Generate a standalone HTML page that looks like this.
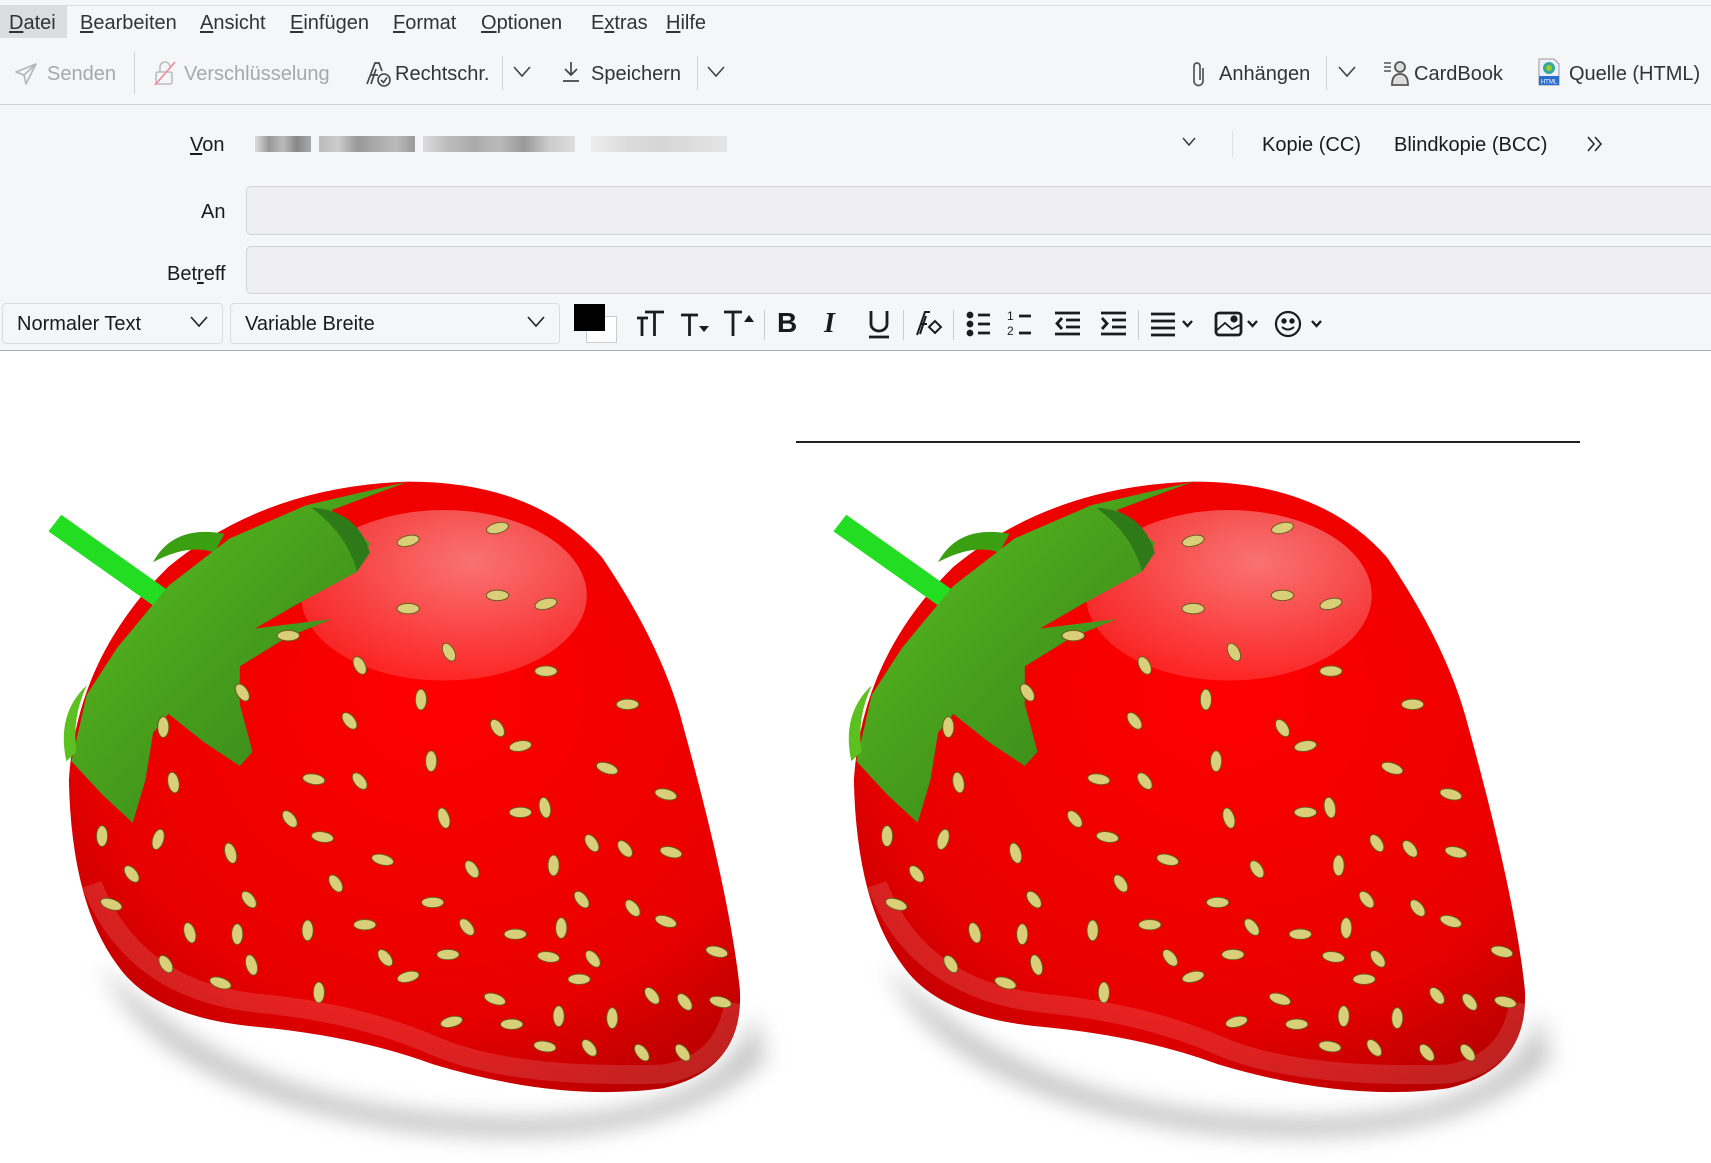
<!DOCTYPE html>
<html><head><meta charset="utf-8">
<style>
*{margin:0;padding:0;box-sizing:border-box}
body{width:1711px;height:1163px;overflow:hidden;background:#fff;font-family:"Liberation Sans","DejaVu Sans",sans-serif;position:relative;color:#1a1a1a}
.top{position:absolute;left:0;top:0;width:1711px;height:351px;background:#f5f6f8}
.t{position:absolute;font-size:20px;white-space:nowrap;line-height:24px}
.menu .t{top:11px;color:#333}
u{text-decoration:underline;text-underline-offset:2px}
.sep{position:absolute;width:1px;background:#cfcfd4}
.hl{position:absolute;height:1px;background:#cfcfd4;left:0;width:1711px}
.box{position:absolute;left:246px;width:1470px;background:#efeff3;border:1px solid #d2d2d8;border-radius:5px}
.sel{position:absolute;top:303px;height:41px;border:1px solid #dcdce0;border-radius:4px;background:#f5f6f8}
svg{position:absolute;overflow:visible}
</style></head><body>
<div class="top"></div>
<div class="hl" style="top:5px;background:#dcdce0"></div>
<div style="position:absolute;left:0;top:6px;width:67px;height:32px;background:#dcdde1"></div>
<div class="menu">
<div class="t" style="left:9px"><u>D</u>atei</div>
<div class="t" style="left:80px"><u>B</u>earbeiten</div>
<div class="t" style="left:200px"><u>A</u>nsicht</div>
<div class="t" style="left:290px"><u>E</u>infügen</div>
<div class="t" style="left:393px"><u>F</u>ormat</div>
<div class="t" style="left:481px"><u>O</u>ptionen</div>
<div class="t" style="left:591px">E<u>x</u>tras</div>
<div class="t" style="left:666px"><u>H</u>ilfe</div>
</div>
<!-- toolbar -->
<svg style="left:14px;top:62px" width="24" height="24" viewBox="0 0 24 24"><path d="M22 2 L2 10 L10 13 L12 22 Z M10 13 L22 2" fill="none" stroke="#b5b5b9" stroke-width="1.6" stroke-linejoin="round"/></svg>
<div class="t" style="left:47px;top:62px;color:#a8a8ac">Senden</div>
<div class="sep" style="left:134px;top:52px;height:42px"></div>
<svg style="left:153px;top:60px" width="24" height="26" viewBox="0 0 24 26"><rect x="3" y="12" width="16" height="12" rx="2" fill="none" stroke="#bcbcc0" stroke-width="1.6"/><path d="M7 12 V7 a5 5 0 0 1 10 0" fill="none" stroke="#bcbcc0" stroke-width="1.6"/><path d="M2 25 L22 2" stroke="#f08a9a" stroke-width="1.6"/></svg>
<div class="t" style="left:184px;top:62px;color:#a8a8ac">Verschlüsselung</div>
<svg style="left:364px;top:60px" width="28" height="28" viewBox="0 0 28 28"><path d="M3 24 L11 3 L15 3 L18 11 M7 15 L14 15 M7 24 L12 9" fill="none" stroke="#444" stroke-width="1.7"/><circle cx="20" cy="20" r="6" fill="#f5f6f8" stroke="#444" stroke-width="1.6"/><path d="M17 20 L19.5 22.5 L23 17.5" fill="none" stroke="#444" stroke-width="1.6"/></svg>
<div class="t" style="left:395px;top:62px;color:#333">Rechtschr.</div>
<div class="sep" style="left:502px;top:56px;height:34px"></div>
<svg style="left:513px;top:66px" width="18" height="12" viewBox="0 0 18 12"><path d="M1 1 L9 10 L17 1" fill="none" stroke="#444" stroke-width="1.6"/></svg>
<svg style="left:561px;top:61px" width="20" height="22" viewBox="0 0 20 22"><path d="M10 1 V14 M4 8 L10 14 L16 8 M2 20 H18" fill="none" stroke="#444" stroke-width="1.7"/></svg>
<div class="t" style="left:591px;top:62px;color:#333">Speichern</div>
<div class="sep" style="left:697px;top:56px;height:34px"></div>
<svg style="left:707px;top:66px" width="18" height="12" viewBox="0 0 18 12"><path d="M1 1 L9 10 L17 1" fill="none" stroke="#444" stroke-width="1.6"/></svg>
<svg style="left:1191px;top:60px" width="16" height="28" viewBox="0 0 16 28"><path d="M12 8 V21 a4.5 4.5 0 0 1 -9 0 V6 a3 3 0 0 1 6 0 V20" fill="none" stroke="#555" stroke-width="1.7"/></svg>
<div class="t" style="left:1219px;top:62px;color:#333">Anhängen</div>
<div class="sep" style="left:1326px;top:56px;height:34px"></div>
<svg style="left:1338px;top:66px" width="18" height="12" viewBox="0 0 18 12"><path d="M1 1 L9 10 L17 1" fill="none" stroke="#444" stroke-width="1.6"/></svg>
<svg style="left:1383px;top:60px" width="28" height="26" viewBox="0 0 28 26"><path d="M1 3 H8 M1 7 H8 M1 11 H8" stroke="#555" stroke-width="1.4"/><circle cx="17" cy="7" r="5" fill="#ddd" stroke="#555" stroke-width="1.8"/><path d="M9 25 Q9 14 17 14 Q25 14 25 25 Z" fill="#ddd" stroke="#555" stroke-width="1.8"/></svg>
<div class="t" style="left:1414px;top:62px;color:#333">CardBook</div>
<svg style="left:1537px;top:58px" width="24" height="28" viewBox="0 0 24 28"><path d="M2 1 H17 L22 6 V27 H2 Z" fill="#eef" stroke="#999"/><circle cx="12" cy="10" r="6" fill="#3a9"/><circle cx="12" cy="10" r="3" fill="#9c3"/><rect x="2" y="18" width="20" height="9" fill="#2a6fd0"/><text x="12" y="25.5" font-size="6" fill="#fff" text-anchor="middle" font-family="Liberation Sans">HTML</text></svg>
<div class="t" style="left:1569px;top:62px;color:#333">Quelle (HTML)</div>
<div class="hl" style="top:104px"></div>
<!-- header fields -->
<div class="t" style="left:190px;top:133px"><u>V</u>on</div>
<div style="position:absolute;left:255px;top:136px;width:56px;height:16px;background:linear-gradient(90deg,#ddd,#999,#bbb,#888,#aaa)"></div>
<div style="position:absolute;left:319px;top:136px;width:96px;height:16px;background:linear-gradient(90deg,#bbb,#ccc,#999,#aaa,#bbb,#999)"></div>
<div style="position:absolute;left:423px;top:136px;width:152px;height:16px;background:linear-gradient(90deg,#ddd,#bbb,#aaa,#bbb,#999,#ccc,#ddd)"></div>
<div style="position:absolute;left:591px;top:136px;width:136px;height:16px;background:linear-gradient(90deg,#eee,#ddd,#d5d5d5,#ddd,#e5e5e5)"></div>
<svg style="left:1182px;top:137px" width="14" height="10" viewBox="0 0 14 10"><path d="M1 1 L7 8 L13 1" fill="none" stroke="#333" stroke-width="1.4"/></svg>
<div class="sep" style="left:1232px;top:130px;height:28px;background:#e0e0e4"></div>
<div class="t" style="left:1262px;top:133px">Kopie (CC)</div>
<div class="t" style="left:1394px;top:133px">Blindkopie (BCC)</div>
<svg style="left:1586px;top:135px" width="18" height="18" viewBox="0 0 18 18"><path d="M2 2 L8 9 L2 16 M9 2 L15 9 L9 16" fill="none" stroke="#222" stroke-width="1.5"/></svg>
<div class="t" style="left:201px;top:200px">An</div>
<div class="box" style="top:186px;height:49px"></div>
<div class="t" style="left:167px;top:262px">Bet<u>r</u>eff</div>
<div class="box" style="top:246px;height:48px"></div>
<!-- format toolbar -->
<div class="sel" style="left:2px;width:221px"></div>
<div class="t" style="left:17px;top:312px">Normaler Text</div>
<svg style="left:190px;top:316px" width="18" height="12" viewBox="0 0 18 12"><path d="M1 1 L9 10 L17 1" fill="none" stroke="#222" stroke-width="1.6"/></svg>
<div class="sel" style="left:230px;width:330px"></div>
<div class="t" style="left:245px;top:312px">Variable Breite</div>
<svg style="left:527px;top:316px" width="18" height="12" viewBox="0 0 18 12"><path d="M1 1 L9 10 L17 1" fill="none" stroke="#222" stroke-width="1.6"/></svg>
<div style="position:absolute;left:586px;top:316px;width:31px;height:27px;background:#fff;border:1px solid #ccc"></div>
<div style="position:absolute;left:574px;top:304px;width:31px;height:27px;background:#000"></div>
<svg style="left:630px;top:308px" width="470" height="30" viewBox="630 308 470 30" fill="none" stroke="#1c1c1c" stroke-width="2.8">
<path d="M637 318 H648 M642 318 V336 M645 312 H664 M654.5 312 V336"/>
<path d="M681 315 H698 M689.5 315 V336"/><path d="M699 326 H709 L704 332 Z" fill="#1c1c1c" stroke="none"/>
<path d="M724 312 H742 M733 312 V336"/><path d="M744 322 H754 L749 315 Z" fill="#1c1c1c" stroke="none"/>
</svg>
<div class="sep" style="left:764px;top:310px;height:30px;background:#ccc"></div>
<div class="t" style="left:777px;top:308px;font-size:28px;font-weight:bold;line-height:30px">B</div>
<div class="t" style="left:824px;top:309px;font-size:28px;font-style:italic;font-family:'Liberation Serif',serif;line-height:30px;font-weight:bold">I</div>
<svg style="left:866px;top:309px" width="26" height="30" viewBox="0 0 26 30" fill="none" stroke="#1c1c1c" stroke-width="2.8"><path d="M5 2 V15 a8 7 0 0 0 16 0 V2 M3 28 H23"/></svg>
<div class="sep" style="left:903px;top:310px;height:30px;background:#ccc"></div>
<svg style="left:915px;top:309px" width="28" height="30" viewBox="0 0 28 30" fill="none" stroke="#1c1c1c" stroke-width="2"><path d="M2 26 L10 3 L15 3 M6 15 H12 M5 25 L11 7"/><path d="M14 18 L20 12 L26 18 L20 24 Z"/></svg>
<div class="sep" style="left:953px;top:310px;height:30px;background:#ccc"></div>
<svg style="left:964px;top:310px" width="370" height="30" viewBox="964 310 370 30" fill="none" stroke="#1c1c1c" stroke-width="2.8">
<path d="M978 315 H990 M978 324 H990 M978 333 H990"/><circle cx="970" cy="315" r="2" fill="#1c1c1c"/><circle cx="970" cy="324" r="2" fill="#1c1c1c"/><circle cx="970" cy="333" r="2" fill="#1c1c1c"/>
<path d="M1019 316 H1031 M1019 333 H1031"/>
<path d="M1055 313 H1080 M1066 320 H1080 M1066 327 H1080 M1055 334 H1080 M1062 318 L1057 323.5 L1062 329"/>
<path d="M1101 313 H1126 M1112 320 H1126 M1112 327 H1126 M1101 334 H1126 M1102 318 L1107 323.5 L1102 329"/>
<path d="M1151 314 H1175 M1151 321 H1175 M1151 328 H1175 M1151 335 H1175"/>
<path d="M1183 321 L1187.5 326 L1192 321" stroke-width="2.4"/>
<rect x="1216" y="313" width="25" height="22" rx="3"/><path d="M1217 330 L1225 323 L1232 329 L1240 325" stroke-width="1.8"/><circle cx="1234" cy="319" r="2.2" fill="#1c1c1c"/>
<path d="M1248 321 L1252.5 326 L1257 321" stroke-width="2.4"/>
<circle cx="1288" cy="324" r="12" stroke-width="2.2"/><circle cx="1284" cy="321" r="1.3" fill="#1c1c1c"/><circle cx="1292" cy="321" r="1.3" fill="#1c1c1c"/><path d="M1282 327 Q1288 332 1294 327" stroke-width="2"/>
<path d="M1312 321 L1316.5 326 L1321 321" stroke-width="2.4"/>
</svg>
<div class="t" style="left:1007px;top:309px;font-size:12px;line-height:14px">1</div>
<div class="t" style="left:1007px;top:324px;font-size:12px;line-height:14px">2</div>
<div class="sep" style="left:1138px;top:310px;height:30px;background:#ccc"></div>
<div class="hl" style="top:350px;background:#aaa"></div>
<!-- content -->
<div style="position:absolute;left:796px;top:441px;width:784px;height:2px;background:#222"></div>
<svg style="left:0;top:0" width="1711" height="1163" viewBox="0 0 1711 1163">
<defs>
<filter id="bl" x="-20%" y="-20%" width="140%" height="140%"><feGaussianBlur stdDeviation="22"/></filter>
<radialGradient id="rg" cx="0.55" cy="0.35" r="0.75"><stop offset="0" stop-color="#ff0000"/><stop offset="0.7" stop-color="#e80000"/><stop offset="1" stop-color="#b00000"/></radialGradient>
<radialGradient id="hg" cx="0.6" cy="0.3" r="0.7"><stop offset="0" stop-color="#fff" stop-opacity="0.45"/><stop offset="1" stop-color="#fff" stop-opacity="0.15"/></radialGradient>
<linearGradient id="lg" x1="0" y1="0" x2="1" y2="1"><stop offset="0" stop-color="#5cc020"/><stop offset="1" stop-color="#2f7a18"/></linearGradient>
<g id="sb">
<path d="M200 1150 Q500 1480 1050 1470 Q1420 1460 1480 1250 L1500 1350 Q1300 1560 800 1500 Q300 1420 200 1150Z" fill="#999" opacity="0.55" filter="url(#bl)"/>
<path d="M800 130 Q1050 130 1180 290 Q1300 480 1340 650 Q1430 1000 1450 1200 Q1460 1370 1300 1410 Q1100 1440 850 1360 Q700 1300 500 1280 Q300 1260 230 1150 Q140 1020 135 760 Q150 500 330 310 Q520 140 800 130Z" fill="url(#rg)"/>
<path d="M180 980 Q260 1200 500 1230 Q700 1250 850 1320 Q1000 1390 1300 1380 Q1420 1360 1440 1230" fill="none" stroke="#fff" stroke-opacity="0.13" stroke-width="40"/>
<ellipse cx="870" cy="370" rx="280" ry="180" fill="url(#hg)"/>
<path d="M95 235 L120 200 L330 360 L305 395Z" fill="#22dd22"/>
<path d="M300 300 Q340 220 440 240 L420 280 Q370 260 300 300Z" fill="#3aa012"/>
<path d="M800 130 L600 180 L450 250 L330 350 L230 480 L170 580 L140 720 L200 790 L260 850 L285 760 L300 660 L330 620 L400 680 L470 730 L495 700 L470 600 L470 520 L560 460 L650 420 L500 440 L580 390 L700 320 L725 260 L650 190Z" fill="url(#lg)"/>
<path d="M610 185 Q700 190 725 280 L700 320 Q680 240 610 185Z" fill="#2f7a18"/>
<path d="M170 560 Q110 620 130 720 L150 700 Q140 630 170 560Z" fill="#5cc020"/>
<g fill="#d8cf78" stroke="#6b5a20" stroke-width="2">
<ellipse cx="800" cy="255" rx="22" ry="11" transform="rotate(-15 800 255)"/><ellipse cx="975" cy="228" rx="22" ry="11" transform="rotate(-15 975 228)"/><ellipse cx="800" cy="398" rx="22" ry="11"/><ellipse cx="975" cy="370" rx="22" ry="11"/><ellipse cx="1070" cy="388" rx="22" ry="11" transform="rotate(-15 1070 388)"/><ellipse cx="880" cy="490" rx="11" ry="20" transform="rotate(-25 880 490)"/><ellipse cx="705" cy="518" rx="11" ry="20" transform="rotate(-25 705 518)"/><ellipse cx="1070" cy="530" rx="22" ry="11"/><ellipse cx="825" cy="590" rx="11" ry="22"/><ellipse cx="685" cy="635" rx="11" ry="20" transform="rotate(-35 685 635)"/><ellipse cx="975" cy="650" rx="11" ry="20" transform="rotate(-30 975 650)"/><ellipse cx="1020" cy="688" rx="22" ry="11" transform="rotate(-10 1020 688)"/><ellipse cx="1230" cy="600" rx="22" ry="11"/><ellipse cx="845" cy="720" rx="11" ry="22"/><ellipse cx="1190" cy="735" rx="22" ry="11" transform="rotate(20 1190 735)"/><ellipse cx="1305" cy="790" rx="22" ry="11" transform="rotate(15 1305 790)"/><ellipse cx="615" cy="758" rx="22" ry="11" transform="rotate(10 615 758)"/><ellipse cx="705" cy="762" rx="11" ry="20" transform="rotate(-35 705 762)"/><ellipse cx="340" cy="765" rx="11" ry="22" transform="rotate(-10 340 765)"/><ellipse cx="320" cy="648" rx="11" ry="22"/><ellipse cx="475" cy="575" rx="11" ry="20" transform="rotate(-30 475 575)"/><ellipse cx="565" cy="455" rx="22" ry="11"/><ellipse cx="870" cy="840" rx="11" ry="22" transform="rotate(-15 870 840)"/><ellipse cx="1020" cy="828" rx="22" ry="11"/><ellipse cx="1068" cy="818" rx="11" ry="22" transform="rotate(-10 1068 818)"/><ellipse cx="568" cy="842" rx="11" ry="20" transform="rotate(-35 568 842)"/><ellipse cx="632" cy="880" rx="22" ry="11" transform="rotate(10 632 880)"/><ellipse cx="750" cy="928" rx="22" ry="11" transform="rotate(15 750 928)"/><ellipse cx="925" cy="948" rx="11" ry="20" transform="rotate(-30 925 948)"/><ellipse cx="1085" cy="940" rx="11" ry="22"/><ellipse cx="1160" cy="893" rx="11" ry="20" transform="rotate(-30 1160 893)"/><ellipse cx="1225" cy="905" rx="11" ry="20" transform="rotate(-35 1225 905)"/><ellipse cx="1315" cy="912" rx="22" ry="11" transform="rotate(15 1315 912)"/><ellipse cx="200" cy="878" rx="11" ry="22"/><ellipse cx="310" cy="885" rx="11" ry="22" transform="rotate(15 310 885)"/><ellipse cx="452" cy="914" rx="11" ry="22" transform="rotate(-15 452 914)"/><ellipse cx="258" cy="958" rx="11" ry="20" transform="rotate(-35 258 958)"/><ellipse cx="658" cy="978" rx="11" ry="20" transform="rotate(-30 658 978)"/><ellipse cx="848" cy="1018" rx="22" ry="11"/><ellipse cx="488" cy="1012" rx="11" ry="20" transform="rotate(-35 488 1012)"/><ellipse cx="218" cy="1022" rx="22" ry="11" transform="rotate(20 218 1022)"/><ellipse cx="1140" cy="1012" rx="11" ry="20" transform="rotate(-35 1140 1012)"/><ellipse cx="1240" cy="1030" rx="11" ry="20" transform="rotate(-35 1240 1030)"/><ellipse cx="1305" cy="1058" rx="22" ry="11" transform="rotate(20 1305 1058)"/><ellipse cx="372" cy="1082" rx="11" ry="22" transform="rotate(-15 372 1082)"/><ellipse cx="465" cy="1085" rx="11" ry="22"/><ellipse cx="603" cy="1077" rx="11" ry="22"/><ellipse cx="715" cy="1065" rx="22" ry="11"/><ellipse cx="915" cy="1070" rx="11" ry="20" transform="rotate(-35 915 1070)"/><ellipse cx="1010" cy="1085" rx="22" ry="11"/><ellipse cx="1100" cy="1072" rx="11" ry="22"/><ellipse cx="755" cy="1135" rx="11" ry="20" transform="rotate(-35 755 1135)"/><ellipse cx="878" cy="1128" rx="22" ry="11"/><ellipse cx="1075" cy="1133" rx="22" ry="11" transform="rotate(10 1075 1133)"/><ellipse cx="1162" cy="1137" rx="11" ry="20" transform="rotate(-35 1162 1137)"/><ellipse cx="800" cy="1175" rx="22" ry="11" transform="rotate(-15 800 1175)"/><ellipse cx="1135" cy="1180" rx="22" ry="11"/><ellipse cx="1405" cy="1122" rx="22" ry="11" transform="rotate(15 1405 1122)"/><ellipse cx="325" cy="1148" rx="11" ry="20" transform="rotate(-30 325 1148)"/><ellipse cx="493" cy="1150" rx="11" ry="22" transform="rotate(-15 493 1150)"/><ellipse cx="432" cy="1188" rx="22" ry="11" transform="rotate(20 432 1188)"/><ellipse cx="625" cy="1208" rx="11" ry="22"/><ellipse cx="970" cy="1222" rx="22" ry="11" transform="rotate(20 970 1222)"/><ellipse cx="1278" cy="1215" rx="11" ry="20" transform="rotate(-35 1278 1215)"/><ellipse cx="1342" cy="1228" rx="11" ry="20" transform="rotate(-35 1342 1228)"/><ellipse cx="1412" cy="1228" rx="22" ry="11" transform="rotate(15 1412 1228)"/><ellipse cx="885" cy="1270" rx="22" ry="11" transform="rotate(-15 885 1270)"/><ellipse cx="1003" cy="1275" rx="22" ry="11"/><ellipse cx="1095" cy="1258" rx="11" ry="22"/><ellipse cx="1200" cy="1262" rx="11" ry="22"/><ellipse cx="1068" cy="1322" rx="22" ry="11" transform="rotate(10 1068 1322)"/><ellipse cx="1155" cy="1325" rx="11" ry="20" transform="rotate(-35 1155 1325)"/><ellipse cx="1258" cy="1335" rx="11" ry="20" transform="rotate(-35 1258 1335)"/><ellipse cx="1338" cy="1335" rx="11" ry="20" transform="rotate(-35 1338 1335)"/>
</g>
</g>
</defs>
<use href="#sb" transform="translate(0,420) scale(0.5102,0.4739)"/>
<use href="#sb" transform="translate(785,420) scale(0.5102,0.4739)"/>
</svg>
</body></html>
